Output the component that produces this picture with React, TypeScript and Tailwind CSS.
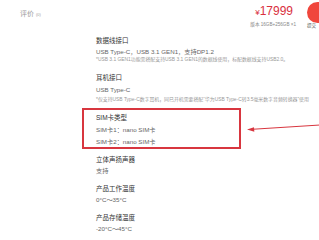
import React from 'react';

const font = { fontFamily: '"Liberation Sans", "Noto Sans CJK SC", sans-serif' };

const Title: React.FC<{ text: string; className?: string }> = ({ text, className = '' }) => (
  <div className={`h-[10px] leading-[10px] text-[6.5px] text-[#333] whitespace-nowrap ${className}`}>{text}</div>
);

const Value: React.FC<{ text: string; className?: string }> = ({ text, className = '' }) => (
  <div className={`h-[10px] leading-[10px] text-[6.2px] text-[#666] whitespace-nowrap ${className}`}>{text}</div>
);

const Note: React.FC<{ text: string; className?: string }> = ({ text, className = '' }) => (
  <div className={`h-[6px] leading-[6px] text-[4.9px] text-[#999] whitespace-nowrap ${className}`}>{text}</div>
);

export default function App() {
  return (
    <div className="relative w-[319px] h-[240px] overflow-hidden bg-white" style={font}>
      {/* header */}
      <div className="flex justify-between h-[35px]">
        <div className="pl-[20px] pt-[9px] flex items-baseline gap-[2px] text-[#999]">
          <span className="text-[7px]">评价</span>
          <span className="text-[4px]">(0)</span>
        </div>
        <div className="flex mr-[-9px] gap-[11px] pt-[2px]">
          <div className="flex flex-col items-end pt-[2px]">
            <div className="text-[#d9303e] leading-[14px] text-[12px] mr-[3px]">
              <span className="text-[8px]">¥</span>17999
            </div>
            <div className="text-[4.6px] text-[#888] leading-[8px] mt-[1px] whitespace-nowrap">版本 16GB+256GB ×1</div>
          </div>
          <div className="flex flex-col items-start">
            <div className="w-[21px] h-[21px] rounded-full bg-[#f0463c]" />
            <div className="text-[4.6px] text-[#555] leading-[6px]">提交</div>
          </div>
        </div>
      </div>

      {/* specs */}
      <div className="ml-[82px] flex flex-col">
        <div className="pl-[14px]">
          <Title text="数据线接口" className="mt-[1px]" />
          <Value text="USB Type-C，USB 3.1 GEN1，支持DP1.2" className="mt-[1px]" />
          <Note text="*USB 3.1 GEN1功能需搭配支持USB 3.1 GEN1的数据线使用，标配数据线支持USB2.0。" />
          <Title text="耳机接口" className="mt-[10px]" />
          <Value text="USB Type-C" className="mt-[2px]" />
          <Note
            text="*仅支持USB Type-C数字耳机，同已开机需要搭配“华为USB Type-C转3.5毫米数字音频转换器”使用"
            className="mt-[2px]"
          />
        </div>

        <div className="mt-[5px] w-[159px] border-2 border-[#d8363f] pl-[12px] pt-[3px]">
          <Title text="SIM卡类型" />
          <Value text="SIM卡1：nano SIM卡" className="mt-[1.5px]" />
          <Value text="SIM卡2：nano SIM卡" className="mt-[2.5px]" />
        </div>

        <div className="pl-[14px]">
          <Title text="立体声扬声器" className="mt-[6px]" />
          <Value text="支持" className="mt-[1px]" />
          <Title text="产品工作温度" className="mt-[8px]" />
          <Value text="0°C～35°C" className="mt-[0.5px]" />
          <Title text="产品存储温度" className="mt-[8.5px]" />
          <Value text="-20°C～45°C" className="mt-[1px]" />
        </div>
      </div>

      {/* annotation arrow */}
      <svg className="absolute inset-0 pointer-events-none" width="319" height="240" viewBox="0 0 319 240">
        <line x1="320" y1="125" x2="252" y2="129.3" stroke="#d8363f" strokeWidth="1" />
        <polygon points="247,129.6 254,127.2 254.3,131.8" fill="#d8363f" />
      </svg>
    </div>
  );
}
